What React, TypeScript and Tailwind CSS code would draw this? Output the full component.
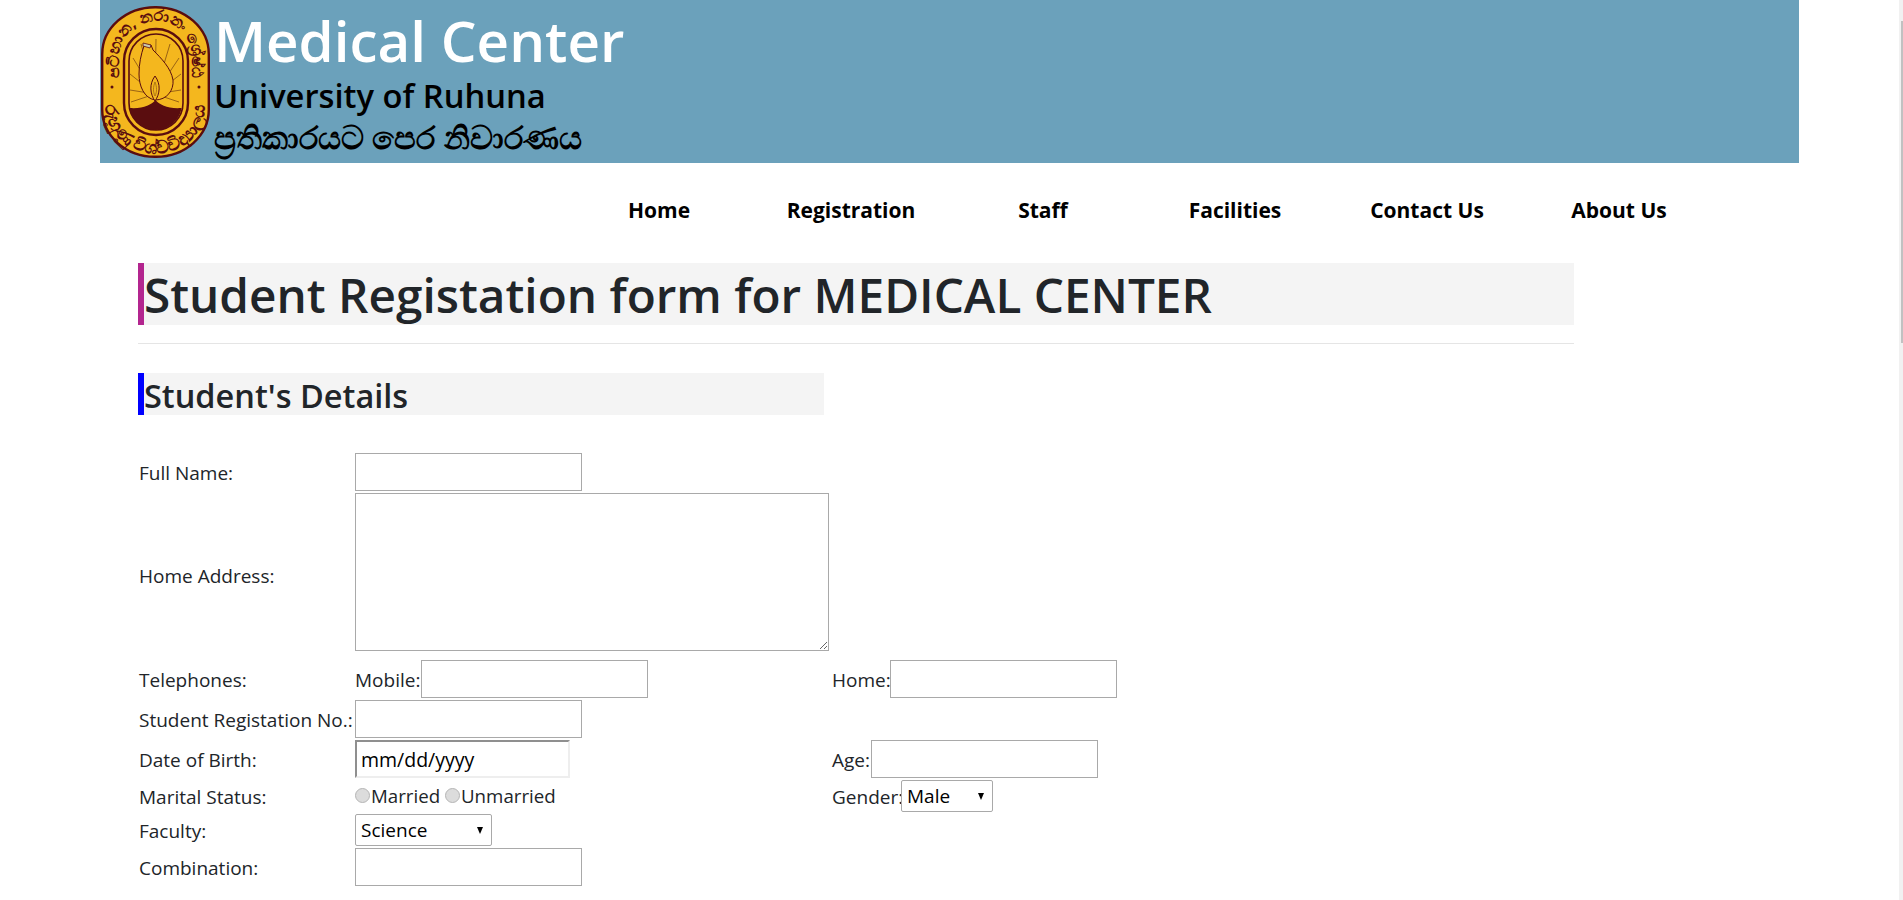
import React from "react";

const maroon = "#5a0d0f";
const gold = "#f4b71e";

// University crest
const Crest = () => (
  <svg viewBox="0 0 109 152" className="ml-px mt-[6px] h-[152px] w-[109px] shrink-0">
    <defs>
      <path id="ringTop" d="M18 84 V52 A36.5 37 0 0 1 91 52 V84" />
      <path id="ringBottom" d="M5 84 V102 A49.5 45.5 0 0 0 104 102 V84" />
    </defs>
    <rect x="1.2" y="1.2" width="106.6" height="149.6" rx="53" ry="47" fill={gold} stroke={maroon} strokeWidth="2.4" />
    <rect x="23" y="23" width="64" height="106" rx="32" fill={gold} stroke={maroon} strokeWidth="2.4" />
    <rect x="28" y="28" width="54" height="96" rx="27" fill={gold} stroke={maroon} strokeWidth="1.6" />
    <g stroke="#9a6414" strokeWidth="1">
      <path d="M54 88 L55 33 M54 88 L69 38 M54 88 L78 52 M54 88 L80 68 M54 88 L80 84 M54 88 L78 96 M54 88 L40 38 M54 88 L32 52 M54 88 L29 68 M54 88 L29 84 M54 88 L30 96" />
    </g>
    <path
      d="M43 40 C40 48 38 58 38 68 C38 80 43 92 54 94 C66 94 73 84 72 74 C70 62 60 52 52 44 L50 39 Z"
      fill={gold}
      stroke={maroon}
      strokeWidth="1"
    />
    <path d="M42 37 L50 39 L49 42 L42 40 Z" fill="#c9c9b0" stroke={maroon} strokeWidth="0.8" />
    <path d="M54 70 C60 78 59 88 54 95 C49 88 48 78 54 70 Z" fill={gold} stroke={maroon} strokeWidth="1" />
    <path d="M54 76 C56 81 56 86 54 90 C52 86 52 81 54 76 Z" fill={gold} stroke="#9a6414" strokeWidth="0.8" />
    <path
      d="M28.4 102 C42 103 50 99 54.5 94 C59 99 67 103 80.6 102 A26.5 26.5 0 0 1 28.4 102 Z"
      fill={maroon}
    />
    <circle cx="11" cy="81" r="1.5" fill={maroon} />
    <circle cx="98" cy="81" r="1.5" fill={maroon} />
    <text fontSize="16" fontWeight="700" fill={maroon} fontFamily="'Noto Sans', sans-serif">
      <textPath href="#ringTop" startOffset="50%" textAnchor="middle">
        පටිභාන, නරානං ශ්‍රේෂ්ඨ
      </textPath>
    </text>
    <text fontSize="18" fontWeight="700" fill={maroon} fontFamily="'Noto Sans', sans-serif">
      <textPath href="#ringBottom" startOffset="50%" textAnchor="middle">
        රුහුණු විශ්වවිද්‍යාලය
      </textPath>
    </text>
  </svg>
);

const Triangle = () => (
  <span className="pointer-events-none absolute right-[9px] top-[13px] h-0 w-0 border-x-[3.5px] border-t-[7px] border-x-transparent border-t-black" />
);

const SelectBox = ({ value, width }: { value: string; width: string }) => (
  <span className={`relative inline-block h-[32px] ${width}`}>
    <select className="h-[32px] w-full appearance-none rounded-[2px] border border-[#a9a9a9] bg-white pl-[5px] text-[19px] leading-[28px] text-black outline-none">
      <option>{value}</option>
    </select>
    <Triangle />
  </span>
);

const inputClass = "block h-[38px] w-[227px] border border-[#a9a9a9] bg-white outline-none";
const labelClass = "pl-px pt-[2px]";

const Radio = ({ name }: { name: string }) => (
  <input
    type="radio"
    name={name}
    className="h-[15px] w-[15px] appearance-none rounded-full border border-[#b5b5b5] bg-[#dcdcdc]"
  />
);

const navItems = ["Home", "Registration", "Staff", "Facilities", "Contact Us", "About Us"];

export default function App() {
  return (
    <div className="relative h-[900px] overflow-hidden bg-white font-['Open_Sans','Noto_Sans',sans-serif] text-[19px] text-[#212529]">
      {/* Header */}
      <header className="ml-[100px] flex h-[163px] w-[1699px] bg-[#6ba1bb]">
        <Crest />
        <div className="ml-[4px] pt-[4px]">
          <div className="h-[74px] text-[56.5px] font-semibold leading-[74px] text-white">Medical Center</div>
          <div className="h-[36px] text-[32.7px] font-semibold leading-[36px] text-black">University of Ruhuna</div>
          <div className="h-[46px] text-[32px] font-semibold leading-[46px] text-black">ප්‍රතිකාරයට පෙර නිවාරණය</div>
        </div>
      </header>

      {/* Nav */}
      <nav className="ml-[563px] grid h-[95px] w-[1152px] grid-cols-6 items-center">
        {navItems.map((item) => (
          <a key={item} className="text-center text-[21px] font-bold text-black">
            {item}
          </a>
        ))}
      </nav>

      <main className="ml-[138px] mt-[5px] w-[1436px]">
        <h1 className="h-[62px] border-l-[6px] border-[#b3258f] bg-[#f4f4f4] text-[47.7px] font-semibold leading-[64px]">
          Student Registation form for MEDICAL CENTER
        </h1>
        <hr className="mt-[18px] border-t border-[#e5e5e5]" />
        <h2 className="mt-[29px] h-[42px] w-[686px] border-l-[6px] border-[#0000ff] bg-[#f4f4f4] text-[32.5px] font-semibold leading-[45px]">
          Student's Details
        </h2>

        {/* Form */}
        <form className="mt-[38px] grid grid-cols-[217px_477px_auto] items-center gap-y-[2px]">
          <label className={labelClass}>Full Name:</label>
          <input className={inputClass} />
          <span />

          <label className={labelClass}>Home Address:</label>
          <div className="h-[165px] self-start">
            <textarea className="block h-[158px] w-[474px] border border-[#a9a9a9] bg-white outline-none" />
          </div>
          <span />

          <label className={labelClass}>Telephones:</label>
          <div className="flex items-center">
            <span className="w-[66px] pt-[2px]">Mobile:</span>
            <input className={inputClass} />
          </div>
          <div className="flex items-center">
            <span className="w-[58px] pt-[2px]">Home:</span>
            <input className={inputClass} />
          </div>

          <label className={labelClass}>Student Registation No.:</label>
          <input className={inputClass} />
          <span />

          <label className={labelClass}>Date of Birth:</label>
          <input
            defaultValue="mm/dd/yyyy"
            className="block h-[38px] w-[215px] border-2 border-t-[#8f8f8f] border-r-[#eeeeee] border-b-[#eeeeee] border-l-[#8f8f8f] bg-white pl-[4px] text-[19.5px] text-black outline-none"
          />
          <div className="flex items-center">
            <span className="w-[39px] pt-[2px]">Age:</span>
            <input className={inputClass} />
          </div>

          <label className={labelClass}>Marital Status:</label>
          <div className="flex items-center text-[18.7px]">
            <Radio name="marital" />
            <span className="ml-[1px] w-[74px]">Married</span>
            <Radio name="marital" />
            <span className="ml-[1px]">Unmarried</span>
          </div>
          <div className="flex items-center">
            <span className="w-[69px] pt-[2px]">Gender:</span>
            <SelectBox value="Male" width="w-[92px]" />
          </div>

          <label className={labelClass}>Faculty:</label>
          <SelectBox value="Science" width="w-[137px]" />
          <span />

          <label className={labelClass}>Combination:</label>
          <input className={inputClass} />
          <span />
        </form>
      </main>

      {/* Cropped scrollbar at the window edge */}
      <div className="absolute inset-y-0 right-0 w-[4px] bg-[#f1f1f1]">
        <div className="absolute right-0 top-[21px] h-[322px] w-[2px] bg-[#c1c1c1]" />
      </div>
    </div>
  );
}
